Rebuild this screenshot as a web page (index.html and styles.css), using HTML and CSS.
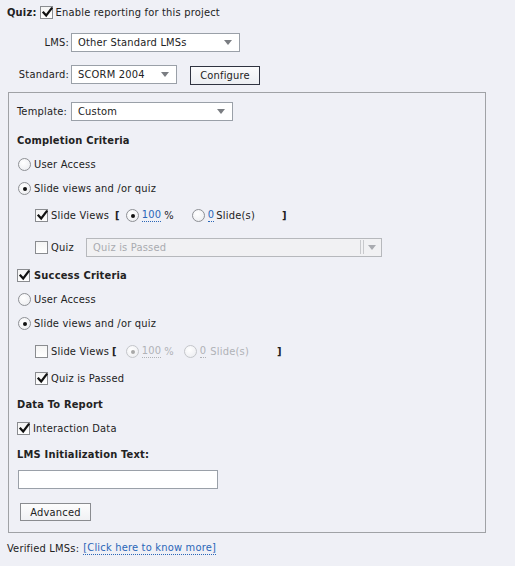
FILE: index.html
```html
<!DOCTYPE html>
<html>
<head>
<meta charset="utf-8">
<link rel="stylesheet" href="styles.css">
</head>
<body>
<div class="page">
  <div class="row quiz-row">
    <span class="bold">Quiz:</span>
    <span class="cb checked"><svg viewBox="0 0 13 13"><path d="M2.5 6.5 L5.2 9.5 L10.5 2.5" /></svg></span>
    <span>Enable reporting for this project</span>
  </div>
  <div class="row lms-row">
    <span class="lbl">LMS:</span>
    <span class="select w-lms"><span class="val">Other Standard LMSs</span><span class="arrow"></span></span>
  </div>
  <div class="row std-row">
    <span class="lbl">Standard:</span>
    <span class="select w-std"><span class="val">SCORM 2004</span><span class="arrow"></span></span>
    <span class="btn configure">Configure</span>
  </div>

  <div class="panel">
    <div class="row">
      <span class="tpl-lbl">Template:</span>
      <span class="select w-tpl"><span class="val">Custom</span><span class="arrow"></span></span>
    </div>
    <div class="row bold mt9">Completion Criteria</div>
    <div class="row mt4"><span class="rd"></span><span class="rtxt">User Access</span></div>
    <div class="row mt4"><span class="rd on"></span><span class="rtxt">Slide views and /or quiz</span></div>
    <div class="row mt7 indent">
      <span class="cb checked"><svg viewBox="0 0 13 13"><path d="M2.5 6.5 L5.2 9.5 L10.5 2.5" /></svg></span>
      <span class="ctxt sv-lbl">Slide Views</span>
      <span class="brk">[</span>
      <span class="rd on r1"></span><span class="num">100</span><span class="pct">%</span>
      <span class="rd r2"></span><span class="num">0</span><span class="slides s1">Slide(s)</span>
      <span class="brk close1">]</span>
    </div>
    <div class="row mt12 indent">
      <span class="cb"></span>
      <span class="ctxt quiz-lbl">Quiz</span>
      <span class="select disabled w-quiz"><span class="val">Quiz is Passed</span><span class="sep"></span><span class="arrow"></span></span>
    </div>
    <div class="row mt8">
      <span class="cb checked"><svg viewBox="0 0 13 13"><path d="M2.5 6.5 L5.2 9.5 L10.5 2.5" /></svg></span>
      <span class="bold ctxt succ">Success Criteria</span>
    </div>
    <div class="row mt4"><span class="rd"></span><span class="rtxt">User Access</span></div>
    <div class="row mt4"><span class="rd on"></span><span class="rtxt">Slide views and /or quiz</span></div>
    <div class="row mt8 indent">
      <span class="cb"></span>
      <span class="ctxt sv-lbl2">Slide Views</span>
      <span class="brk">[</span>
      <span class="rd on dis r3"></span><span class="num dis-t">100</span><span class="pct dis-t">%</span>
      <span class="rd dis r4"></span><span class="num dis-t">0</span><span class="slides s2 dis-t">Slide(s)</span>
      <span class="brk close2">]</span>
    </div>
    <div class="row mt7 indent">
      <span class="cb checked"><svg viewBox="0 0 13 13"><path d="M2.5 6.5 L5.2 9.5 L10.5 2.5" /></svg></span>
      <span class="ctxt">Quiz is Passed</span>
    </div>
    <div class="row bold mt6">Data To Report</div>
    <div class="row mt4">
      <span class="cb checked"><svg viewBox="0 0 13 13"><path d="M2.5 6.5 L5.2 9.5 L10.5 2.5" /></svg></span>
      <span class="rtxt">Interaction Data</span>
    </div>
    <div class="row bold mt6">LMS Initialization Text:</div>
    <div class="row mt5"><span class="textin"></span></div>
    <div class="row mt13"><span class="btn advanced">Advanced</span></div>
  </div>

  <div class="row verified">
    <span>Verified LMSs:</span>
    <span class="link">[Click here to know more]</span>
  </div>
</div>
</body>
</html>
```

FILE: styles.css
```css
html, body {
  margin: 0;
  padding: 0;
  background: #eff0f6;
}
body {
  width: 515px;
  height: 566px;
  overflow: hidden;
  font-family: "DejaVu Sans Condensed", "DejaVu Sans", sans-serif;
  font-stretch: condensed;
  font-size: 11px;
  letter-spacing: 0.2px;
  color: #222;
}
.page {
  padding: 2px 0 0 8px;
}
.row {
  display: flex;
  align-items: center;
  height: 20px;
  white-space: nowrap;
}
.bold { font-weight: bold; }
.mt4 { margin-top: 4px; }
.mt5 { margin-top: 5px; }
.mt6 { margin-top: 6px; }
.mt7 { margin-top: 7px; }
.mt8 { margin-top: 8px; }
.mt9 { margin-top: 9px; }
.mt12 { margin-top: 12px; }
.mt13 { margin-top: 13px; }

.quiz-row { margin-left: -1px; }
.quiz-row .cb { margin: 0 3px 0 3px; }

.lms-row { margin-top: 10px; }
.std-row { margin-top: 12px; }
.lbl {
  width: 61px;
  text-align: right;
  margin-right: 2px;
}

.cb {
  width: 11px;
  height: 11px;
  border: 1px solid #8a8c90;
  background: linear-gradient(#f4f4f4, #ffffff);
  display: inline-block;
  position: relative;
  flex: none;
}
.cb svg {
  position: absolute;
  left: 0;
  top: -1px;
  width: 13px;
  height: 13px;
  overflow: visible;
}
.cb svg path {
  fill: none;
  stroke: #111;
  stroke-width: 2.2;
  stroke-linecap: square;
}

.rd {
  width: 11px;
  height: 11px;
  border: 1px solid #8e9095;
  border-radius: 50%;
  background: radial-gradient(circle at 40% 35%, #ffffff, #e9eaee);
  position: relative;
  flex: none;
  margin-left: 1px;
}
.rd.on::after {
  content: "";
  position: absolute;
  left: 4px;
  top: 4px;
  width: 4px;
  height: 4px;
  border-radius: 50%;
  background: #111;
}
.rd.dis { border-color: #c4c6ca; }
.rd.dis.on::after { background: #a8a8a8; }
.rtxt { margin-left: 3px; }
.ctxt { margin-left: 3px; }

.select {
  height: 17px;
  border: 1px solid #9aa0a8;
  background: #fff;
  display: flex;
  align-items: center;
  position: relative;
  flex: none;
}
.select .val { padding-left: 6px; flex: 1; }
.select .arrow {
  width: 0;
  height: 0;
  border-left: 4px solid transparent;
  border-right: 4px solid transparent;
  border-top: 5px solid #7a7d82;
  margin-right: 7px;
}
.w-lms { width: 167px; }
.w-std { width: 104px; }
.w-tpl { width: 160px; }
.w-quiz { width: 294px; margin-left: 12px; }
.select.disabled {
  background: #f1f1f3;
  border-color: #b6b8bc;
  color: #a9abb0;
}
.select.disabled .sep {
  width: 2px;
  height: 14px;
  border-left: 1px solid #c8c9cc;
  border-right: 1px solid #c8c9cc;
  margin-right: 4px;
}
.select.disabled .arrow { border-top-color: #a9abb0; margin-right: 5px; }

.btn {
  display: flex;
  align-items: center;
  justify-content: center;
  border: 1px solid #2f3340;
  background: linear-gradient(#fbfbfc, #eceef2);
  flex: none;
}
.configure {
  width: 68px;
  height: 17px;
  margin-left: 13px;
  margin-top: 3px;
}

.panel {
  width: 468px;
  margin-top: 8px;
  border: 1px solid #a0a2a6;
  padding: 8px 0 10px 8px;
}
.tpl-lbl { width: 52px; margin-right: 2px; }
.indent { padding-left: 18px; }
.sv-lbl { width: 64px; margin-left: 3px; }
.brk { font-weight: bold; }
.r1 { margin-left: 6px; }
.num {
  color: #2a66b8;
  margin-left: 3px;
  border-bottom: 1px dotted #2a66b8;
  line-height: 12px;
}
.pct { margin-left: 3px; }
.r2 { margin-left: 18px; }
.s1 { margin-left: 2px; }
.close1 { margin-left: 27px; }
.quiz-lbl { width: 23px; }
.succ { margin-left: 4px; }
.sv-lbl2 { width: 61px; }
.r3 { margin-left: 9px; }
.r4 { margin-left: 10px; }
.s2 { margin-left: 4px; }
.dis-t { color: #b0b2b6; }
.num.dis-t { border-bottom-color: #b0b2b6; }
.close2 { margin-left: 28px; }

.textin {
  width: 198px;
  height: 17px;
  border: 1px solid #9aa0a8;
  background: #fff;
  margin-left: 1px;
}
.advanced {
  width: 69px;
  height: 16px;
  margin-left: 3px;
  border-color: #8a8c90;
  background: linear-gradient(#fdfdfd, #f0f1f4);
}

.verified {
  margin-top: 5px;
  margin-left: -1px;
}
.verified .link {
  margin-left: 4px;
  color: #2a66b8;
  border-bottom: 1px dotted #2a66b8;
  line-height: 12px;
}
```
